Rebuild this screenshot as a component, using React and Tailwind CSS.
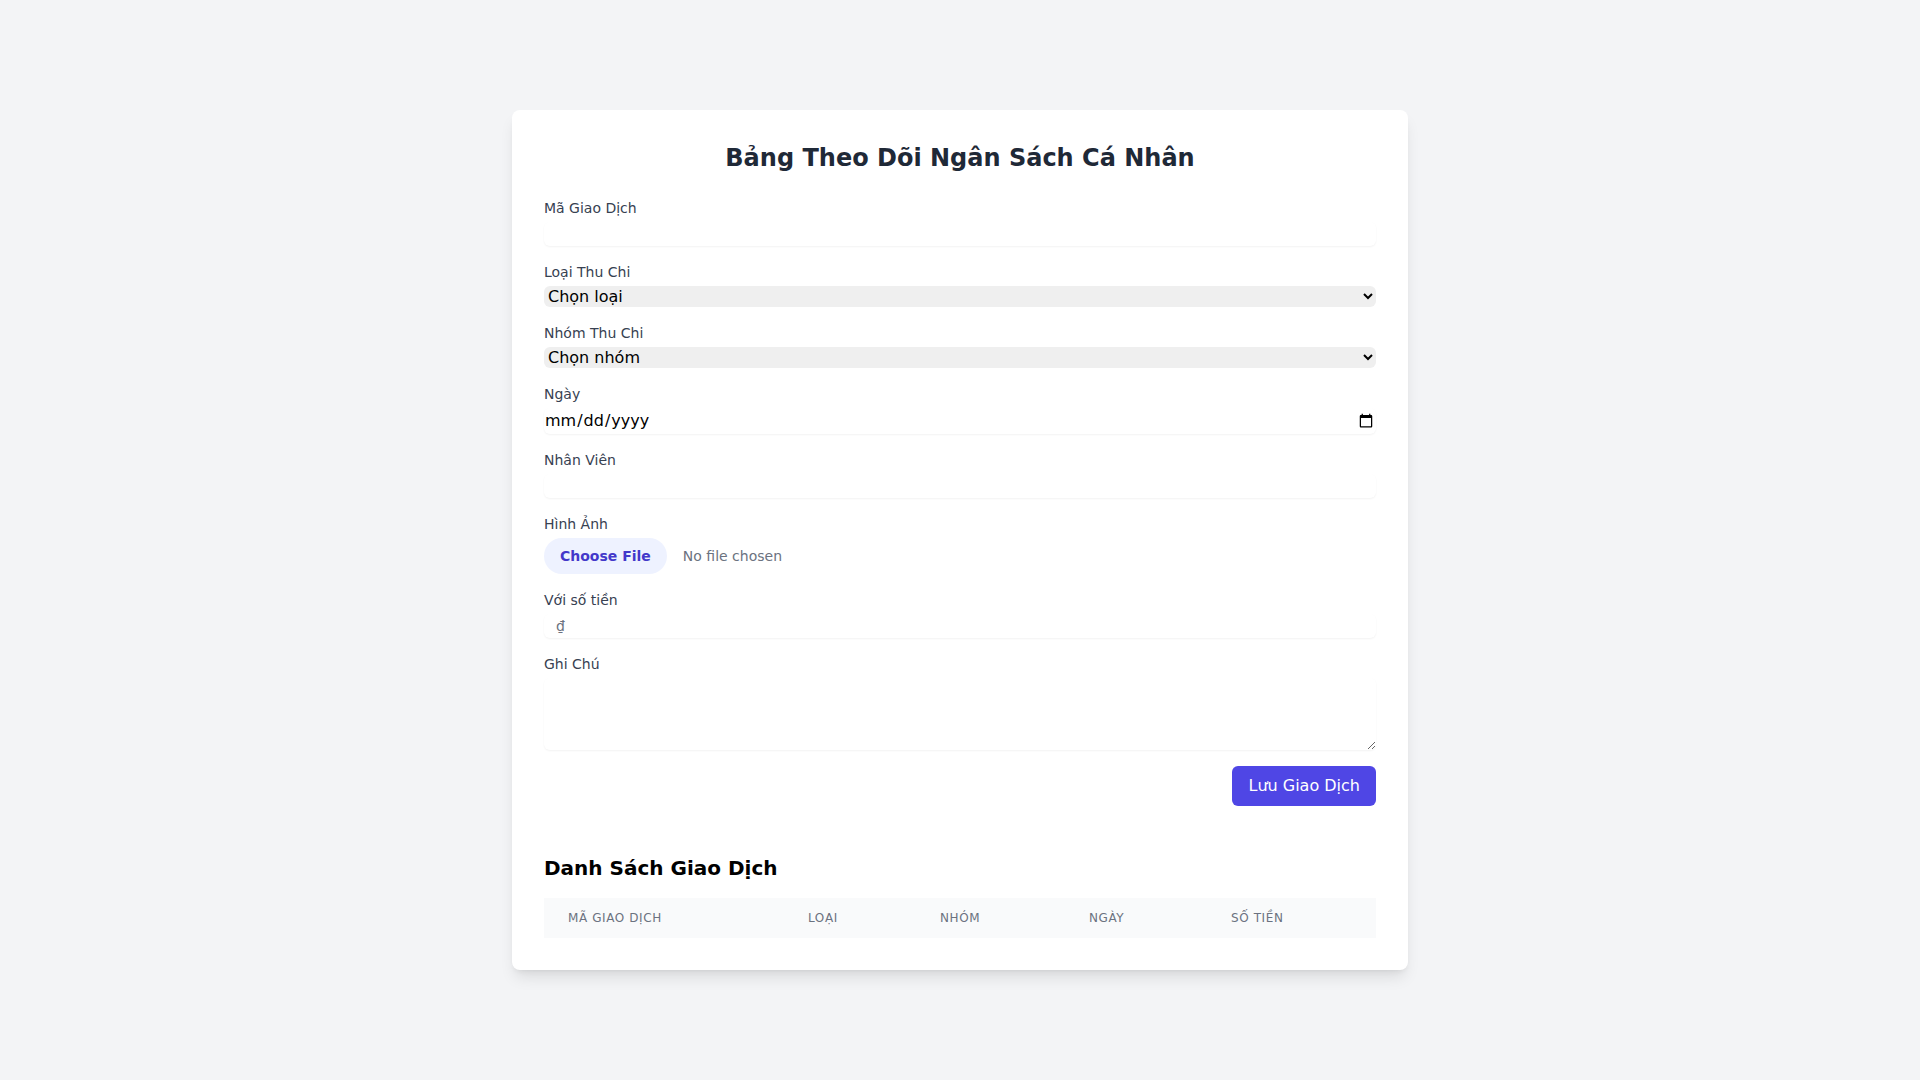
import React from 'react'

const Field = ({ label, children }) => (
  <div>
    <label className="block text-sm font-medium text-[#374151]">{label}</label>
    {children}
  </div>
)

const inputCls = 'mt-1 block w-full h-6 rounded-md bg-white shadow-xs outline-none'
const selectCls = 'mt-1 block w-full h-[21px] rounded-md bg-[#efefef] outline-none appearance-auto'

const columns = [
  { name: 'Mã Giao Dịch', w: 'w-[240px]' },
  { name: 'Loại', w: 'w-[132px]' },
  { name: 'Nhóm', w: 'w-[149px]' },
  { name: 'Ngày', w: 'w-[142px]' },
  { name: 'Số Tiền', w: 'w-[169px]' },
]

const App = () => {
  return (
    <div className="min-h-screen bg-[#f3f4f6] flex items-center justify-center font-['DejaVu_Sans',sans-serif]">
      <div className="w-[896px] bg-white rounded-lg shadow-lg p-8">
        <h1 className="text-2xl font-bold text-[#1f2937] text-center mb-6">
          Bảng Theo Dõi Ngân Sách Cá Nhân
        </h1>

        {/* Form */}
        <form className="flex flex-col gap-4" onSubmit={(e) => e.preventDefault()}>
          <Field label="Mã Giao Dịch">
            <input type="text" className={inputCls} />
          </Field>

          <Field label="Loại Thu Chi">
            <select className={selectCls} defaultValue="">
              <option value="">Chọn loại</option>
              <option value="thu">Thu</option>
              <option value="chi">Chi</option>
            </select>
          </Field>

          <Field label="Nhóm Thu Chi">
            <select className={selectCls} defaultValue="">
              <option value="">Chọn nhóm</option>
              <option value="an">Ăn uống</option>
              <option value="luong">Lương</option>
            </select>
          </Field>

          <Field label="Ngày">
            <input type="date" className="mt-1 block w-full h-[26px] rounded-md bg-white shadow-xs outline-none" />
          </Field>

          <Field label="Nhân Viên">
            <input type="text" className={inputCls} />
          </Field>

          <Field label="Hình Ảnh">
            <input
              type="file"
              className="mt-1 block w-full text-sm text-[#6b7280] file:mr-4 file:py-2 file:px-4 file:rounded-full file:border-0 file:text-sm file:font-semibold file:bg-[#eef2ff] file:text-[#4338ca]"
            />
          </Field>

          <Field label="Với số tiền">
            <div className="relative mt-1">
              <span className="absolute inset-y-0 left-3 flex items-center text-sm text-[#6b7280] pointer-events-none">₫</span>
              <input type="text" className="block w-full h-6 pl-7 rounded-md bg-white shadow-xs outline-none" />
            </div>
          </Field>

          <Field label="Ghi Chú">
            <textarea rows={3} className="mt-1 block w-full h-[72px] rounded-md bg-white shadow-xs outline-none" />
          </Field>

          <div className="flex justify-end">
            <button type="submit" className="bg-[#4f46e5] text-white px-4 py-2 rounded-md">
              Lưu Giao Dịch
            </button>
          </div>
        </form>

        {/* List */}
        <div className="mt-12">
          <h2 className="text-xl font-semibold mb-4">Danh Sách Giao Dịch</h2>
          <table className="w-full">
            <thead className="bg-[#f9fafb]">
              <tr>
                {columns.map((c) => (
                  <th
                    key={c.name}
                    className={`${c.w} px-6 py-3 text-left text-xs font-medium text-[#6b7280] uppercase tracking-wider`}
                  >
                    {c.name}
                  </th>
                ))}
              </tr>
            </thead>
            <tbody></tbody>
          </table>
        </div>
      </div>
    </div>
  )
}

export default App
